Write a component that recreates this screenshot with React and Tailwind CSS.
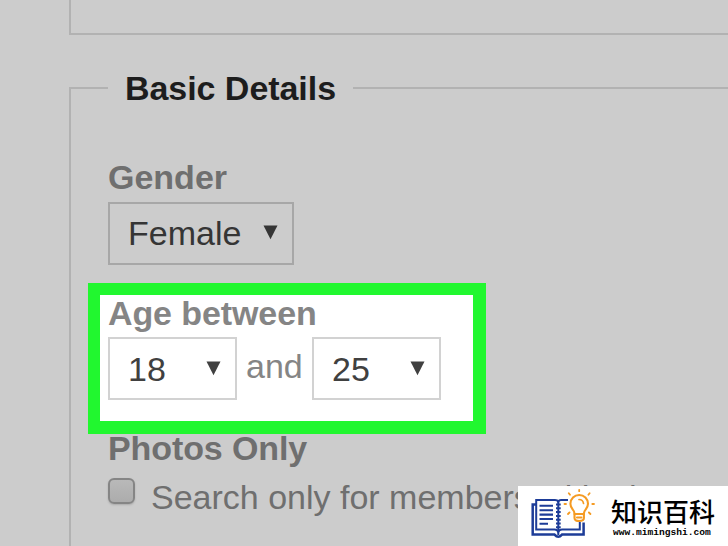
function Caret() {
  return (
    <svg className="block h-[15px] w-[15px] shrink-0" viewBox="0 0 15 15">
      <path d="M.5 .5H14.5L7.5 14.3Z" fill="currentColor" />
    </svg>
  );
}

function SelectBox({ value, className }) {
  return (
    <div className={`flex h-[63px] items-start justify-between border-[2px] pt-[10px] pl-[18px] pr-[14px] ${className}`}>
      <span className="leading-[38px]">{value}</span>
      <span className="pt-[11px]"><Caret /></span>
    </div>
  );
}

function BookLogo() {
  return (
    <svg className="block h-[60px] w-[70px] shrink-0" viewBox="0 0 70 60" fill="none">
      <g stroke="#1d3c98">
        <path d="M50 14H43Q41 14 40.3 15.8Q39.5 14 37 14H18.2V43.5H36.5Q39.3 43.5 40.3 46Q41.3 43.5 44 43.5H61.8V36" strokeWidth="2" />
        <path d="M18 18.5H14.7V48.6H36.5Q38.5 50.8 40.3 50.8Q42 50.8 44 48.6H65.6V36.5" strokeWidth="2.5" />
        <path d="M40.3 15V49" strokeWidth="2" />
        <path d="M38 18.5H42.7M38 22.3H42.7M38 26.1H42.7M38 29.9H42.7M38 33.7H42.7M38 37.5H42.7M38 41.3H42.7" strokeWidth="2" />
        <path d="M21.5 19.8H35M21.5 24.2H35M21.5 28.6H35M21.5 33H35M21.5 37.7H30" strokeWidth="2.1" />
      </g>
    </svg>
  );
}

function Bulb() {
  return (
    <svg className="absolute left-[45px] top-0 h-[48px] w-[34px]" viewBox="0 0 34 48" fill="none" stroke="#f59b23" strokeWidth="2.1" strokeLinecap="round" strokeLinejoin="round">
      <path d="M11.5 27.5C11.5 23.5 7.4 23 7.4 17.8A8.8 8.8 0 0 1 25 17.8C25 23 20.9 23.5 20.9 27.5V32Q20.9 35 16.2 35Q11.5 35 11.5 32Z" fill="white" />
      <path d="M11.5 28H20.9M14 31.5H18.4" />
      <path d="M16 13.5A4.6 4.6 0 0 1 20.5 17.5" strokeWidth="1.7" />
      <path d="M16.2 3.8V5.2M5.8 7.2L7 8.8M26.6 7.2L25.4 8.8M1.5 18H3M29.3 18H31M5 28L6.5 26.5M27.4 28L25.9 26.5" strokeWidth="1.8" />
    </svg>
  );
}

export default function App() {
  return (
    <div className="relative h-[546px] w-[728px] overflow-hidden bg-[#cccccc] font-['Liberation_Sans',Arial,sans-serif] text-[34px] leading-[38px] whitespace-nowrap text-[#6f6f6f]">
      <div className="ml-[69px] h-[35px] border-b-[2px] border-l-[2px] border-[#b2b2b2]" />

      <div className="mt-[34px] ml-[69px] flex h-[38px] items-start">
        <div className="mt-[18px] h-[20px] w-[39px] border-t-[2px] border-l-[2px] border-[#b2b2b2]" />
        <h2 className="w-[245px] pl-[17px] font-bold tracking-[-0.05px] text-[#1d1d1d]">Basic Details</h2>
        <div className="mt-[18px] h-[2px] flex-1 bg-[#b2b2b2]" />
      </div>

      <section className="ml-[69px] h-[439px] border-l-[2px] border-[#b2b2b2] pt-[51px]">
        <div className="pl-[37px]">
          <div className="font-bold">Gender</div>
          <SelectBox value="Female" className="mt-[6px] w-[186px] border-[#a7a7a7] text-[#353535]" />
        </div>

        <div className="mt-[18px] ml-[17px] h-[151px] w-[398px] border-t-[12px] border-r-[13px] border-b-[13px] border-l-[12px] border-[#21f72f] bg-white pl-[8px] text-[#858585]">
          <div className="-mt-px font-bold tracking-[-0.1px]">Age between</div>
          <div className="mt-[5px] flex items-start">
            <SelectBox value="18" className="w-[129px] border-[#d2d2d2] pt-[11px] text-[#404040]" />
            <span className="w-[75px] pt-[10px] pl-[9px]">and</span>
            <SelectBox value="25" className="w-[129px] border-[#d2d2d2] pt-[11px] text-[#404040]" />
          </div>
        </div>

        <div className="pl-[37px]">
          <div className="-mt-[5px] font-bold tracking-[-0.1px]">Photos Only</div>
          <div className="mt-[11px] flex items-start">
            <div className="h-[26px] w-[27px] rounded-[6px] border-[2px] border-[#858585] bg-gradient-to-b from-[#b9b9b9] to-[#acacac] shadow-[0_1px_2px_#aaaaaa]" />
            <span className="pl-[16px]">Search only for members with photos</span>
          </div>
        </div>
      </section>

      <div className="absolute top-[486px] left-[518px] flex h-[60px] w-[210px] bg-white">
        <BookLogo />
        <Bulb />
        <div className="ml-[23px] pt-[10px]">
          <div className="font-['Noto_Sans_CJK_SC',sans-serif] text-[26px] leading-[30px] font-medium text-black">知识百科</div>
          <div className="pt-px pl-[2px] font-['Liberation_Mono',monospace] text-[9.6px] leading-[11px] font-bold text-black">www.mimingshi.com</div>
        </div>
      </div>
    </div>
  );
}
